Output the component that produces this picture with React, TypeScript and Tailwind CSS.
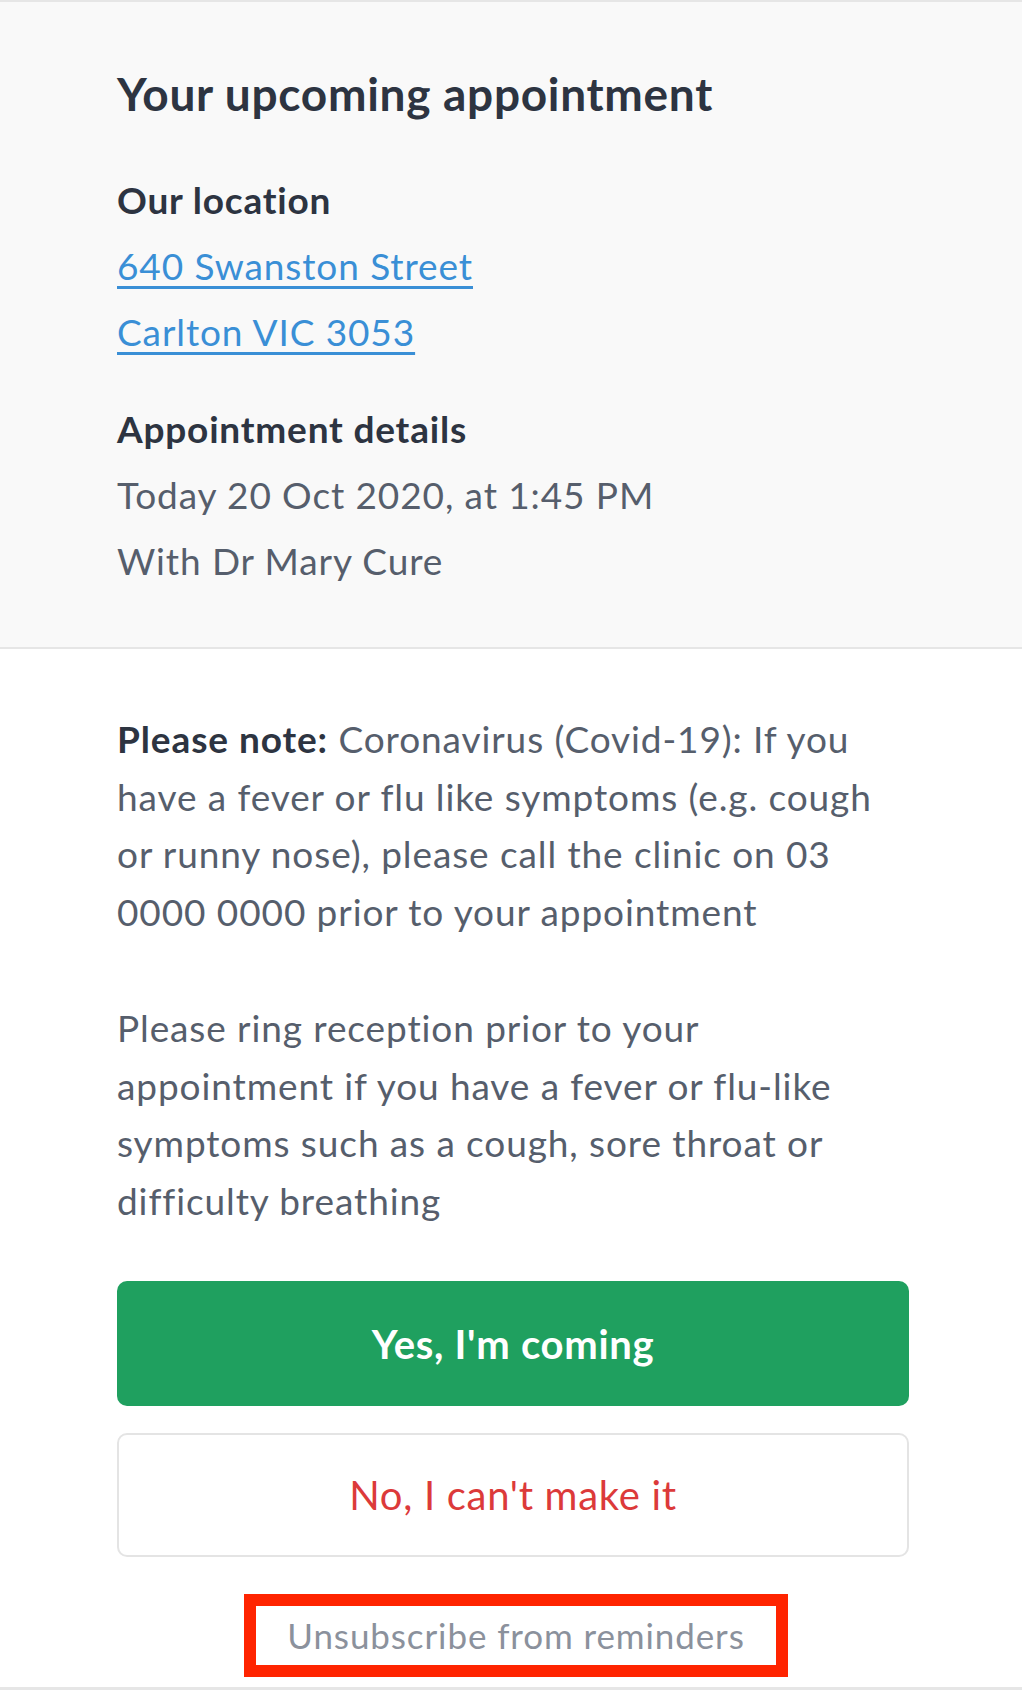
import React from "react";

export default function App() {
  return (
    <div
      className="w-full min-h-[1690px] bg-white"
      style={{ fontFamily: "Lato, 'Open Sans', Arial, sans-serif" }}
    >
      <section className="bg-[#f9f9f9] border-t-2 border-b-2 border-[#e6e6e6] pl-[117px] pr-[60px] pt-[64px] pb-[53px]">
        <h1 className="text-[46px] leading-[56px] font-bold tracking-[0.7px] text-[#2d3441]">
          Your upcoming appointment
        </h1>
        <div className="mt-[45px]">
          <h2 className="text-[37px] leading-[66px] font-bold tracking-[0.8px] text-[#2d3441]">Our location</h2>
          <a href="#" className="block w-fit text-[37px] leading-[66px] tracking-[0.9px] text-[#3a8fd6] underline decoration-[3px] underline-offset-[6px]">
            640 Swanston Street
          </a>
          <a href="#" className="block w-fit text-[37px] leading-[66px] tracking-[0.9px] text-[#3a8fd6] underline decoration-[3px] underline-offset-[6px]">
            Carlton VIC 3053
          </a>
        </div>
        <div className="mt-[31px]">
          <h2 className="text-[37px] leading-[66px] font-bold tracking-[0.8px] text-[#2d3441]">Appointment details</h2>
          <p className="text-[37px] leading-[66px] tracking-[0.9px] text-[#565e6c]">Today 20 Oct 2020, at 1:45 PM</p>
          <p className="text-[37px] leading-[66px] tracking-[0.9px] text-[#565e6c]">With Dr Mary Cure</p>
        </div>
      </section>

      <section className="pl-[117px] pt-[61px] pb-[10px] border-b-[3px] border-[#e6e6e6]">
        <div className="w-[792px]">
          <p className="text-[37px] leading-[57.5px] tracking-[0.9px] text-[#565e6c]">
            <span className="font-bold text-[#2d3441]">Please note:</span> Coronavirus (Covid-19): If you have a fever or flu like symptoms (e.g. cough or runny nose), please call the clinic on 03 0000 0000 prior to your appointment
          </p>
          <p className="mt-[59px] text-[37px] leading-[57.5px] tracking-[0.9px] text-[#565e6c]">
            Please ring reception prior to your appointment if you have a fever or flu-like symptoms such as a cough, sore throat or difficulty breathing
          </p>

          <div className="mt-[52px] flex flex-col gap-[27px]">
            <button className="h-[125px] w-full rounded-[10px] bg-[#1fa05f] text-white text-[40px] font-bold tracking-[0.7px]">
              Yes, I'm coming
            </button>
            <button className="h-[124px] w-full rounded-[10px] border-2 border-[#e4e4e4] bg-white text-[#dc3a3a] text-[40px] tracking-[0.7px]">
              No, I can't make it
            </button>
          </div>

          <div className="mt-[37px] ml-[127px] w-[544px] border-[12px] border-[#ff2400] flex justify-center">
            <a href="#" className="text-[35px] leading-[59px] tracking-[0.9px] text-[#8b919c]">
              Unsubscribe from reminders
            </a>
          </div>
        </div>
      </section>
    </div>
  );
}
